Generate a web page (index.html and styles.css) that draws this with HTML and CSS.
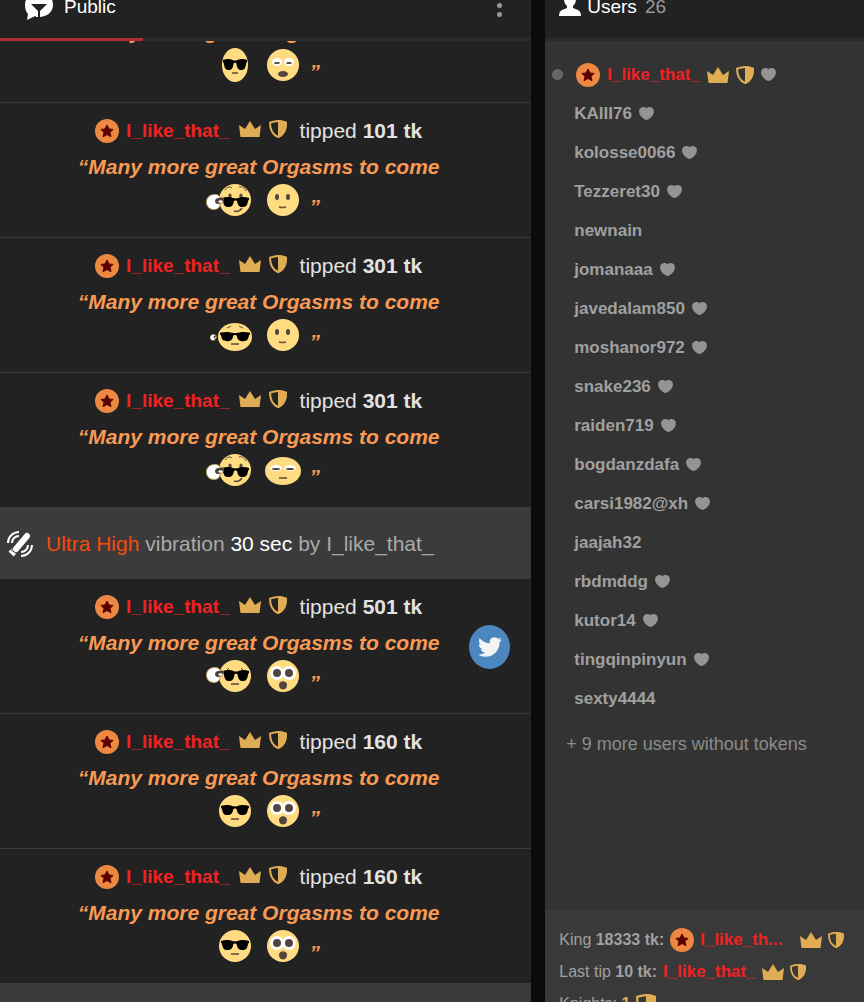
FILE: index.html
```html
<!DOCTYPE html>
<html lang="en">

<head>
  <meta charset="UTF-8">
  <meta name="viewport" content="width=device-width, initial-scale=1.0">
  <title>Chat</title>
  <link rel="stylesheet" href="styles.css">
</head>

<body>
  <!-- shared icons -->
  <svg class="sprite" aria-hidden="true">
    <symbol id="badge" viewBox="0 0 24 24">
      <circle cx="12" cy="12" r="12" fill="#ec8842" />
      <path d="M12 6l2 4 4 .4-3 3 1 4.300L12 15.500l-4 2.200 1-4.300-3-3 4-.4z" fill="#5a0000" stroke="#5a0000" stroke-linejoin="round" />
    </symbol>
    <symbol id="crown" viewBox="0 0 22 18">
      <path d="M1.500 17L0 5l6 4 5-8 5 8 6-4-1.500 12z" fill="#e0ad55" />
    </symbol>
    <symbol id="shield" viewBox="0 0 18 18">
      <path d="M9 1c2.500 0 5 .6 8 1.600 0 7-2 12-8 14.400C3 14.600 1 9.600 1 2.600 4 1.600 6.500 1 9 1z" fill="none" stroke="#e0ad55" stroke-width="2" />
      <path d="M9 0c3 0 6 .8 9 2 0 8-2 13.500-9 16z" fill="#e0ad55" />
    </symbol>
    <symbol id="heart" viewBox="0 0 14 12">
      <path d="M7 1.200C8.500-.3 11-.3 12.500.9 14.500 2.700 14.300 5.600 12.500 8 11 10 9 11.500 7 12 5 11.500 3 10 1.500 8-.3 5.600-.5 2.700 1.500.9 3-.3 5.500-.3 7 1.200z" fill="#949494" />
    </symbol>
    <symbol id="glasses" viewBox="0 0 30 12" preserveAspectRatio="none">
      <path d="M0 1c4-1.300 9-1.300 12 0 2 .7 4 .7 6 0 3-1.300 8-1.300 12 0v2c-1 .4-1 1.400-1.400 3-.8 3.500-2 5-5.500 5-4 0-5.600-2-6.200-6-.3-1.700-3.500-1.700-3.800 0-.6 4-2.200 6-6.200 6-3.500 0-4.700-1.500-5.500-5C1 4.400 1 3.400 0 3z" fill="#000" />
    </symbol>
    <symbol id="hand" viewBox="0 0 18 16">
      <path d="M8 .5c3-.3 5 .5 6 2.500l3 1v4l-3 2c0 3-2 5.500-6 5.500-5 0-7.500-3.500-7.500-7.500S3 1 8 .5z" fill="#fff" stroke="#b5985a" />
      <path d="M17 4c-4-1-8 0-8 3s3 4 6 2l-3-1c1-2 3-2 5-1z" fill="#4d4037" />
    </symbol>

    <symbol id="cool-tall" viewBox="0 0 48 34">
      <ellipse cx="24" cy="17" rx="13" ry="17" fill="#ffdc82" />
      <use href="#glasses" x="12" y="11" width="24" height="12" />
      <path d="M21 25h6" stroke="#5a4a3a" stroke-width="1.500" />
    </symbol>
    <symbol id="cool" viewBox="0 0 48 34">
      <circle cx="24" cy="17" r="16" fill="#ffdc82" />
      <use href="#glasses" x="10" y="11" width="28" height="11" />
      <path d="M20 25h8" stroke="#5a4a3a" stroke-width="1.500" />
    </symbol>
    <symbol id="cool-hand" viewBox="-6 0 54 34">
      <circle cx="24" cy="17" r="16" fill="#ffdc82" />
      <path d="M16 11l2-2M30 9l2 2" stroke="#5a4a3a" />
      <use href="#glasses" x="12" y="11" width="26" height="12" />
      <path d="M20 25h8" stroke="#5a4a3a" stroke-width="1.500" />
      <use href="#hand" x="-5" y="8" width="18" height="16" />
    </symbol>
    <symbol id="smirk-hand" viewBox="-6 0 54 34">
      <circle cx="24" cy="17" r="16" fill="#ffdc82" />
      <path d="M14 7c2-3 5-4 7-2M28 4c3-1 6 1 7 4" fill="none" stroke="#5a4a3a" />
      <path d="M19 12v4M30 12v4" stroke="#5a4a3a" stroke-width="3" stroke-linecap="round" />
      <use href="#glasses" x="11" y="14" width="27" height="11" />
      <path d="M23 28c3 1 6 0 8-3" fill="none" stroke="#5a4a3a" stroke-width="1.500" />
      <use href="#hand" x="-5" y="11" width="18" height="16" />
    </symbol>
    <symbol id="cool-wide" viewBox="-6 0 54 34">
      <ellipse cx="24" cy="19" rx="17" ry="14" fill="#ffdc82" />
      <path d="M16 10l4-2M28 8l4 2" stroke="#5a4a3a" />
      <use href="#glasses" x="9" y="14" width="30" height="10" />
      <path d="M20 26h8" stroke="#5a4a3a" stroke-width="1.500" />
      <use href="#hand" x="-1" y="16" width="7" height="7" />
    </symbol>
    <symbol id="yawn" viewBox="0 0 48 34">
      <circle cx="24" cy="17" r="16" fill="#ffdc82" />
      <ellipse cx="18" cy="14" rx="5" ry="4" fill="#fff" />
      <ellipse cx="30" cy="14" rx="5" ry="4" fill="#fff" />
      <ellipse cx="18" cy="15" rx="3" ry="1" fill="#4a413a" />
      <ellipse cx="30" cy="15" rx="3" ry="1" fill="#4a413a" />
      <ellipse cx="24" cy="26" rx="5" ry="3" fill="#54433f" />
    </symbol>
    <symbol id="neutral" viewBox="0 0 48 34">
      <circle cx="24" cy="17" r="16" fill="#ffdc82" />
      <ellipse cx="18" cy="14" rx="2" ry="3" fill="#54433f" />
      <ellipse cx="29" cy="14" rx="2" ry="3" fill="#54433f" />
      <path d="M20 24q3 1 7 0" fill="none" stroke="#6b5638" stroke-width="1.500" />
    </symbol>
    <symbol id="squint" viewBox="0 0 48 34">
      <ellipse cx="24" cy="18" rx="18" ry="14" fill="#ffdc82" />
      <ellipse cx="17" cy="15" rx="6" ry="3" fill="#fff" />
      <ellipse cx="31" cy="15" rx="6" ry="3" fill="#fff" />
      <ellipse cx="17" cy="16" rx="4" ry="1" fill="#4a413a" />
      <ellipse cx="31" cy="16" rx="4" ry="1" fill="#4a413a" />
      <path d="M20 25h8" stroke="#5a4a3a" stroke-width="1.500" />
    </symbol>
    <symbol id="shock" viewBox="0 0 48 34">
      <circle cx="24" cy="17" r="16" fill="#ffdc82" />
      <circle cx="18" cy="14" r="7" fill="#fff" />
      <circle cx="30" cy="14" r="7" fill="#fff" />
      <circle cx="18" cy="14" r="4" fill="#54433f" />
      <circle cx="30" cy="14" r="4" fill="#54433f" />
      <path d="M20 26c0-5 8-5 8 0 0 6-8 6-8 0z" fill="#54433f" />
    </symbol>
  </svg>

  <div class="app">
    <main class="chat">
      <header class="header">
        <button class="tab" type="button">
          <svg width="28" height="28" viewBox="0 0 28 28" aria-hidden="true">
            <path d="M14 0c8 0 14 5 14 13 0 7-6 12-14 12-2 0-3 0-4-1l-8 4 1-6C1 20 0 17 0 13 0 5 6 0 14 0z" fill="#fff" />
            <path d="M6 12h16l-7 7v7h-2v-7z" fill="#222" />
          </svg>
          Public
        </button>
        <button class="more" type="button" aria-label="More">
          <i></i><i></i><i></i>
        </button>
      </header>

      <div class="list">
        <div class="item first">
          <p class="tip">
            <svg class="badge"><use href="#badge" /></svg>
            <a class="name" href="#">I_like_that_</a>
            <svg class="crown"><use href="#crown" /></svg>
            <svg class="shield"><use href="#shield" /></svg>
            <span class="amount">tipped <b>101 tk</b></span>
          </p>
          <p class="text">“Many more great Orgasms to come</p>
          <p class="emojis">
            <svg class="emoji"><use href="#cool-tall" /></svg>
            <svg class="emoji"><use href="#yawn" /></svg>
            <span class="quote">”</span>
          </p>
        </div>

        <div class="item">
          <p class="tip">
            <svg class="badge"><use href="#badge" /></svg>
            <a class="name" href="#">I_like_that_</a>
            <svg class="crown"><use href="#crown" /></svg>
            <svg class="shield"><use href="#shield" /></svg>
            <span class="amount">tipped <b>101 tk</b></span>
          </p>
          <p class="text">“Many more great Orgasms to come</p>
          <p class="emojis">
            <svg class="emoji with-hand"><use href="#smirk-hand" /></svg>
            <svg class="emoji"><use href="#neutral" /></svg>
            <span class="quote">”</span>
          </p>
        </div>

        <div class="item">
          <p class="tip">
            <svg class="badge"><use href="#badge" /></svg>
            <a class="name" href="#">I_like_that_</a>
            <svg class="crown"><use href="#crown" /></svg>
            <svg class="shield"><use href="#shield" /></svg>
            <span class="amount">tipped <b>301 tk</b></span>
          </p>
          <p class="text">“Many more great Orgasms to come</p>
          <p class="emojis">
            <svg class="emoji with-hand"><use href="#cool-wide" /></svg>
            <svg class="emoji"><use href="#neutral" /></svg>
            <span class="quote">”</span>
          </p>
        </div>

        <div class="item">
          <p class="tip">
            <svg class="badge"><use href="#badge" /></svg>
            <a class="name" href="#">I_like_that_</a>
            <svg class="crown"><use href="#crown" /></svg>
            <svg class="shield"><use href="#shield" /></svg>
            <span class="amount">tipped <b>301 tk</b></span>
          </p>
          <p class="text">“Many more great Orgasms to come</p>
          <p class="emojis">
            <svg class="emoji with-hand"><use href="#smirk-hand" /></svg>
            <svg class="emoji"><use href="#squint" /></svg>
            <span class="quote">”</span>
          </p>
        </div>

        <div class="notice">
          <svg width="26" height="26" viewBox="0 0 26 26" aria-hidden="true">
            <path d="M9 18L20 5" stroke="#fff" stroke-width="6" stroke-linecap="round" />
            <path d="M3 19l5 5" stroke="#fff" stroke-width="4" />
            <path d="M3 18l7 5" stroke="#3b3b3b" />
            <path d="M1 12C1 6 6 1 12 1M5 12c0-4 3-7 7-7M14 25c6 0 11-5 11-11M14 21c4 0 7-3 7-7" fill="none" stroke="#fff" stroke-width="2" />
          </svg>
          <p><span class="level">Ultra High</span> vibration <span class="sec">30 sec</span> by I_like_that_</p>
        </div>

        <div class="item">
          <p class="tip">
            <svg class="badge"><use href="#badge" /></svg>
            <a class="name" href="#">I_like_that_</a>
            <svg class="crown"><use href="#crown" /></svg>
            <svg class="shield"><use href="#shield" /></svg>
            <span class="amount">tipped <b>501 tk</b></span>
          </p>
          <p class="text">“Many more great Orgasms to come</p>
          <p class="emojis">
            <svg class="emoji with-hand"><use href="#cool-hand" /></svg>
            <svg class="emoji"><use href="#shock" /></svg>
            <span class="quote">”</span>
          </p>
          <!-- floats over the messages -->
          <a class="twitter" href="#" aria-label="Twitter">
            <svg width="24" height="24" viewBox="0 0 24 24">
              <path d="M23.953 4.570a10 10 0 01-2.825.775 4.958 4.958 0 002.163-2.723c-.951.555-2.005.959-3.127 1.184a4.920 4.920 0 00-8.384 4.482C7.690 8.095 4.067 6.130 1.640 3.162a4.822 4.822 0 00-.666 2.475c0 1.710.870 3.213 2.188 4.096a4.904 4.904 0 01-2.228-.616v.060a4.923 4.923 0 003.946 4.827 4.996 4.996 0 01-2.212.085 4.936 4.936 0 004.604 3.417 9.867 9.867 0 01-6.102 2.105c-.390 0-.779-.023-1.170-.067a13.995 13.995 0 007.557 2.209c9.053 0 13.998-7.496 13.998-13.985 0-.210 0-.420-.015-.630A9.935 9.935 0 0024 4.590z" fill="#f4f4f4" />
            </svg>
          </a>
        </div>

        <div class="item">
          <p class="tip">
            <svg class="badge"><use href="#badge" /></svg>
            <a class="name" href="#">I_like_that_</a>
            <svg class="crown"><use href="#crown" /></svg>
            <svg class="shield"><use href="#shield" /></svg>
            <span class="amount">tipped <b>160 tk</b></span>
          </p>
          <p class="text">“Many more great Orgasms to come</p>
          <p class="emojis">
            <svg class="emoji"><use href="#cool" /></svg>
            <svg class="emoji"><use href="#shock" /></svg>
            <span class="quote">”</span>
          </p>
        </div>

        <div class="item">
          <p class="tip">
            <svg class="badge"><use href="#badge" /></svg>
            <a class="name" href="#">I_like_that_</a>
            <svg class="crown"><use href="#crown" /></svg>
            <svg class="shield"><use href="#shield" /></svg>
            <span class="amount">tipped <b>160 tk</b></span>
          </p>
          <p class="text">“Many more great Orgasms to come</p>
          <p class="emojis">
            <svg class="emoji"><use href="#cool" /></svg>
            <svg class="emoji"><use href="#shock" /></svg>
            <span class="quote">”</span>
          </p>
        </div>

        <div class="notice"></div>
      </div>
    </main>

    <aside class="users">
      <header class="header">
        <svg width="22" height="26" viewBox="0 0 22 26" aria-hidden="true">
          <path d="M11 2c4 0 6 3 6 7 0 3-1 5-3 7v2l5 2c2 1 3 3 3 6H0c0-3 1-5 3-6l5-2v-2c-2-2-3-4-3-7 0-4 2-7 6-7z" fill="#fff" />
        </svg>
        <h2>Users</h2>
        <span class="count">26</span>
      </header>

      <div class="people">
        <ul>
          <li class="top">
            <i class="dot"></i>
            <svg class="badge"><use href="#badge" /></svg>
            <a class="name" href="#">I_like_that_</a>
            <svg class="crown"><use href="#crown" /></svg>
            <svg class="shield"><use href="#shield" /></svg>
            <svg class="heart"><use href="#heart" /></svg>
          </li>
          <li><a href="#">KAIII76</a><svg class="heart"><use href="#heart" /></svg></li>
          <li><a href="#">kolosse0066</a><svg class="heart"><use href="#heart" /></svg></li>
          <li><a href="#">Tezzeret30</a><svg class="heart"><use href="#heart" /></svg></li>
          <li><a href="#">newnain</a></li>
          <li><a href="#">jomanaaa</a><svg class="heart"><use href="#heart" /></svg></li>
          <li><a href="#">javedalam850</a><svg class="heart"><use href="#heart" /></svg></li>
          <li><a href="#">moshanor972</a><svg class="heart"><use href="#heart" /></svg></li>
          <li><a href="#">snake236</a><svg class="heart"><use href="#heart" /></svg></li>
          <li><a href="#">raiden719</a><svg class="heart"><use href="#heart" /></svg></li>
          <li><a href="#">bogdanzdafa</a><svg class="heart"><use href="#heart" /></svg></li>
          <li><a href="#">carsi1982@xh</a><svg class="heart"><use href="#heart" /></svg></li>
          <li><a href="#">jaajah32</a></li>
          <li><a href="#">rbdmddg</a><svg class="heart"><use href="#heart" /></svg></li>
          <li><a href="#">kutor14</a><svg class="heart"><use href="#heart" /></svg></li>
          <li><a href="#">tingqinpinyun</a><svg class="heart"><use href="#heart" /></svg></li>
          <li><a href="#">sexty4444</a></li>
        </ul>
        <p class="rest">+ 9 more users without tokens</p>
      </div>

      <footer class="stats">
        <p class="king">
          <span>King <b>18333 tk:</b></span>
          <svg class="badge"><use href="#badge" /></svg>
          <a class="name" href="#">I_like_th...</a>
          <svg class="crown"><use href="#crown" /></svg>
          <svg class="shield"><use href="#shield" /></svg>
        </p>
        <p>
          <span>Last tip <b>10 tk:</b></span>
          <a class="name" href="#">I_like_that_</a>
          <svg class="crown"><use href="#crown" /></svg>
          <svg class="shield"><use href="#shield" /></svg>
        </p>
        <p>
          <span>Knights: <b class="gold">1</b></span>
          <svg class="shield big"><use href="#shield" /></svg>
        </p>
      </footer>
    </aside>
  </div>
</body>

</html>
```
FILE: styles.css
```css
* {
  box-sizing: border-box;
  margin: 0;
  padding: 0;
}

body {
  background-color: #0b0b0b;
  color: #e2e2e2;
  font-family: "Liberation Sans", Arial, sans-serif;
  font-size: 21px;
}

a {
  color: inherit;
  text-decoration: none;
}

ul {
  list-style: none;
}

button {
  border: none;
  background: none;
  color: inherit;
  font: inherit;
  cursor: pointer;
}

svg {
  flex: none;
}

.sprite {
  position: absolute;
  width: 0;
  height: 0;
}

.app {
  display: grid;
  grid-template-columns: 5fr 3fr;
  gap: 14px;
  height: 100vh;
  overflow: hidden;
}

/* icons */
.badge {
  width: 24px;
  height: 24px;
}

.crown {
  width: 22px;
  height: 18px;
}

.shield {
  width: 18px;
  height: 18px;
}

.heart {
  width: 15px;
  height: 13px;
}

.name {
  color: #f02222;
  font-weight: bold;
}

/* left: chat */
.chat {
  display: flex;
  flex-direction: column;
  min-width: 0;
  min-height: 0;
  background-color: #222;
}

.header {
  display: flex;
  flex: none;
  align-items: flex-start;
  height: 41px;
  background-color: #222;
  border-bottom: 3px solid #2b2b2b;
  font-size: 19px;
  color: #fff;
}

.chat .header {
  justify-content: space-between;
}

.tab {
  display: flex;
  gap: 11px;
  width: 143px;
  height: 41px;
  padding-left: 25px;
  border-bottom: 3px solid #b02c36;
  line-height: 14px;
  align-items: flex-start;
}

.tab svg {
  margin-top: -8px;
}

.more {
  display: flex;
  flex-direction: column;
  gap: 4px;
  margin-top: -6px;
  margin-right: 29px;
}

.more i {
  width: 5px;
  height: 5px;
  border-radius: 50%;
  background-color: #999;
}

.list {
  flex: 1;
  min-height: 0;
  overflow: hidden;
}

.item {
  position: relative;
  padding: 10px 14px 20px 0;
  border-bottom: 1px solid #393939;
}

/* scrolled partly out of view */
.item.first {
  margin-top: -73px;
}

.tip,
.text,
.emojis {
  display: flex;
  justify-content: center;
  align-items: center;
  height: 36px;
}

.tip .name {
  margin: 0 9px 0 7px;
  font-size: 19px;
}

.tip .crown,
.tip .shield {
  margin-bottom: 4px;
}

.tip .shield {
  margin: 0 13px 4px 8px;
}

.text,
.quote {
  color: #f89a54;
  font-weight: bold;
  font-style: italic;
}

.emojis {
  height: 32px;
  padding: 0 0 2px 14px;
}

.emoji {
  width: 48px;
  height: 34px;
}

.emoji.with-hand {
  width: 54px;
  margin-left: -6px;
}

.quote {
  align-self: flex-end;
  height: 20px;
  margin-left: 2px;
}

.notice {
  display: flex;
  align-items: center;
  gap: 13px;
  height: 71px;
  padding-left: 7px;
  background-color: #3b3b3b;
  color: #aaa;
}

.level {
  color: #f64a0c;
}

.sec {
  color: #fff;
}

.twitter {
  position: absolute;
  top: 46px;
  right: 21px;
  display: flex;
  justify-content: center;
  align-items: center;
  width: 41px;
  height: 44px;
  border-radius: 50%;
  background-color: #4b87be;
}

/* right: users */
.users {
  display: flex;
  flex-direction: column;
  min-width: 0;
  min-height: 0;
  background-color: #333;
}

.users .header {
  padding-left: 14px;
  line-height: 13px;
}

.users .header svg {
  margin-top: -10px;
}

.users h2 {
  margin: 0 8px 0 6px;
  font-size: 19px;
  font-weight: normal;
}

.count {
  color: #999;
}

.people {
  flex: 1;
  min-height: 0;
  padding-top: 14px;
  overflow: hidden;
  color: #a0a0a0;
  font-size: 17px;
}

.people li {
  display: flex;
  align-items: center;
  gap: 7px;
  height: 39px;
  padding-left: 29px;
  font-weight: bold;
}

.people .top {
  padding-left: 7px;
}

.dot {
  width: 11px;
  height: 11px;
  margin-right: 6px;
  border-radius: 50%;
  background-color: #666;
}

.rest {
  padding: 16px 0 0 21px;
  color: #8c8c8c;
  font-size: 18px;
}

.stats {
  flex: none;
  height: 92px;
  padding: 14px 0 0 14px;
  overflow: hidden;
  background-color: #393939;
  color: #a0a0a0;
  font-size: 16px;
}

.stats p {
  display: flex;
  align-items: center;
  gap: 6px;
  height: 32px;
}

.stats .name {
  font-size: 17px;
}

.stats .shield {
  width: 16px;
  height: 16px;
}

.stats .shield.big {
  width: 20px;
  height: 20px;
}

.king .crown {
  margin-left: 12px;
}

.gold {
  color: #e0ad55;
}
```
